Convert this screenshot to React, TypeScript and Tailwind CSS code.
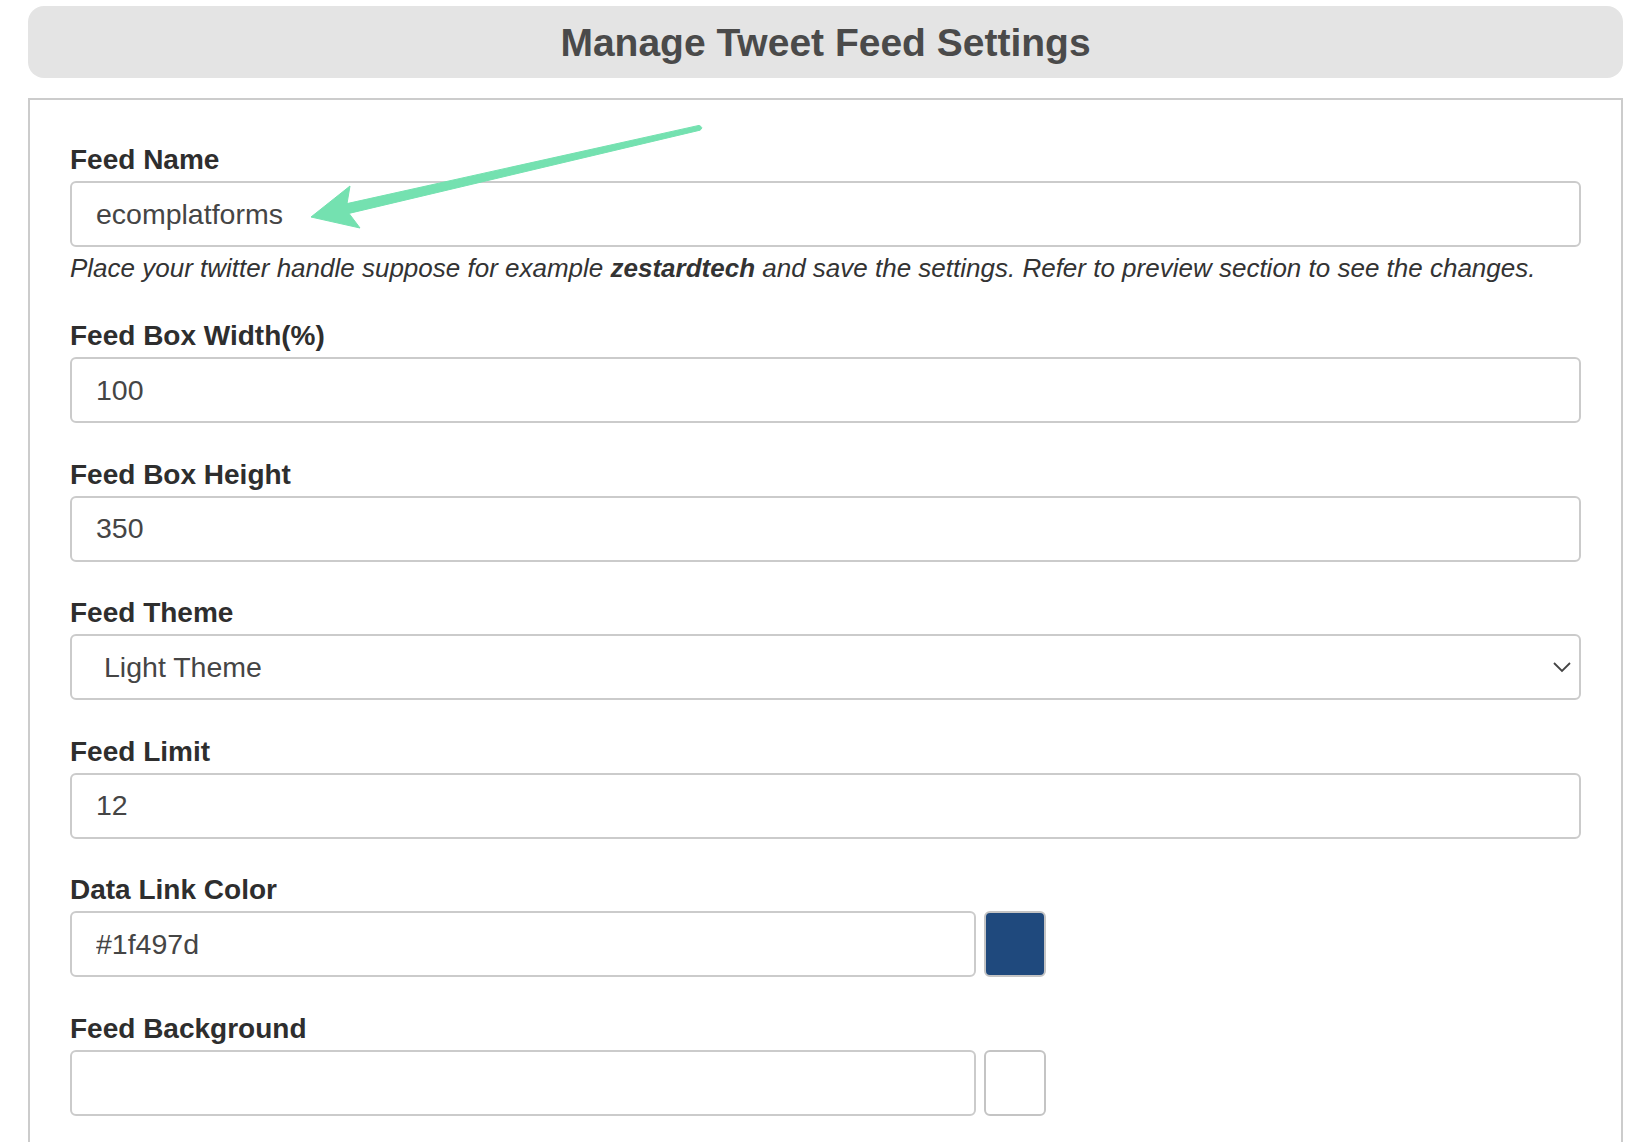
import React from 'react';

const font = { fontFamily: '"Liberation Sans", Arial, Helvetica, sans-serif' };

const Label = ({ children }: { children: React.ReactNode }) => (
  <label className="block h-[32px] leading-[32px] text-[28px] font-bold text-[#2e2e2e] mb-[5px]">
    {children}
  </label>
);

const inputCls =
  'block h-[66px] w-full rounded-[6px] border-2 border-[#cbcbcb] bg-white px-[24px] text-[28.5px] text-[#454545] outline-none';

const Field = ({ label, value }: { label: string; value: string }) => (
  <div>
    <Label>{label}</Label>
    <input className={inputCls} defaultValue={value} style={font} />
  </div>
);

const ColorField = ({ label, value, swatch }: { label: string; value: string; swatch: string }) => (
  <div>
    <Label>{label}</Label>
    <div className="flex items-center gap-[8px]">
      <input className={inputCls + ' !w-[906px]'} defaultValue={value} style={font} />
      <div className={'h-[66px] w-[62px] rounded-[6px] border-2 border-[#c4c4c4] ' + swatch} />
    </div>
  </div>
);

const Arrow = () => (
  <svg className="absolute left-0 top-0 pointer-events-none" width="1642" height="300" viewBox="0 0 1642 300">
    <path
      d="M 311 217 L 350 186 L 347 203.6 L 699 125.4 Q 704 127.5 700 130.2 L 349 213.4 L 360 228 Z"
      fill="#74e1b0"
      stroke="#74e1b0"
      strokeWidth="1"
      strokeLinejoin="round"
    />
  </svg>
);

export default function App() {
  return (
    <div className="relative min-h-screen bg-white pt-[6px] pl-[28px]" style={font}>
      {/* Title bar */}
      <div className="flex h-[72px] w-[1595px] items-center justify-center rounded-[16px] bg-[#e4e4e4]">
        <h1 className="mt-[3px] text-[39px] font-bold text-[#4a4a4a]">Manage Tweet Feed Settings</h1>
      </div>

      {/* Settings panel */}
      <div className="mt-[20px] w-[1595px] border-2 border-[#cccccc] px-[40px] pt-[44px] pb-[40px]">
        <div>
          <Label>Feed Name</Label>
          <input className={inputCls} defaultValue="ecomplatforms" style={font} />
          <p className="mt-[4px] text-[26px] leading-[34px] italic text-[#333333]">
            Place your twitter handle suppose for example <b>zestardtech</b> and save the settings. Refer to preview
            section to see the changes.
          </p>
        </div>

        <div className="mt-[35px] flex flex-col gap-[35.5px]">
          <Field label="Feed Box Width(%)" value="100" />
          <Field label="Feed Box Height" value="350" />

          <div>
            <Label>Feed Theme</Label>
            <div className="relative">
              <select
                className={inputCls + ' appearance-none !pl-[32px]'}
                defaultValue="light"
                style={font}
              >
                <option value="light">Light Theme</option>
                <option value="dark">Dark Theme</option>
              </select>
              <svg
                className="absolute right-[10px] top-[27px] pointer-events-none"
                width="18"
                height="12"
                viewBox="0 0 18 12"
              >
                <polyline points="1,2 9,10 17,2" fill="none" stroke="#444" strokeWidth="1.8" />
              </svg>
            </div>
          </div>

          <Field label="Feed Limit" value="12" />
          <ColorField label="Data Link Color" value="#1f497d" swatch="bg-[#1f497d]" />
          <ColorField label="Feed Background" value="" swatch="bg-white" />
        </div>
      </div>

      <Arrow />
    </div>
  );
}
